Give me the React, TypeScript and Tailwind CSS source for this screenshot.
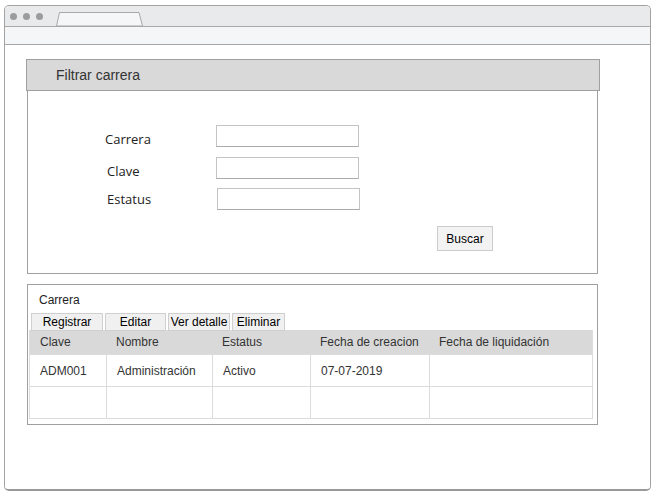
const sans = { fontFamily: '"Liberation Sans", Arial, sans-serif' };

const columns = [
  { label: 'Clave', width: 'w-[76px]' },
  { label: 'Nombre', width: 'w-[106px]' },
  { label: 'Estatus', width: 'w-[98px]' },
  { label: 'Fecha de creacion', width: 'w-[119px]' },
  { label: 'Fecha de liquidación', width: 'flex-1' },
];

const rows = [
  ['ADM001', 'Administración', 'Activo', '07-07-2019', ''],
  ['', '', '', '', ''],
];

function Field({ label, labelClass, inputClass }: { label: string; labelClass?: string; inputClass?: string }) {
  return (
    <div className="flex items-center h-[22px]">
      <div
        className={`w-[111px] text-[13px] text-[#222] ${labelClass ?? ''}`}
        style={{ fontFamily: '"Open Sans", "Noto Sans", sans-serif' }}
      >
        {label}
      </div>
      <div className={`w-[143px] h-[22px] border border-[#c4c4c4] border-b-[#aaa] bg-white ${inputClass ?? ''}`} />
    </div>
  );
}

function SmallButton({ label, width }: { label: string; width: string }) {
  return (
    <div className={`${width} h-[18px] flex items-center justify-center bg-[#f0f0f0] border border-[#cfcfcf] text-[12px] text-black`}>
      {label}
    </div>
  );
}

export default function App() {
  return (
    <div className="w-[656px] h-[497px] bg-white pt-[5px] pl-[4px]" style={sans}>
      <div className="w-[647px] h-[486px] rounded-[5px] border border-[#a3a3a3] border-b-2 border-b-[#999] overflow-hidden flex flex-col">
        {/* title bar */}
        <div className="h-[21px] bg-[#e9eaeb] border-b border-[#a8a8a8] flex items-end shrink-0">
          <div className="flex gap-[6px] self-center ml-[5px] mt-[1px]">
            <span className="w-[7px] h-[7px] rounded-full bg-[#9c9c9c]" />
            <span className="w-[7px] h-[7px] rounded-full bg-[#9c9c9c]" />
            <span className="w-[7px] h-[7px] rounded-full bg-[#9c9c9c]" />
          </div>
          <svg width="87" height="14" viewBox="0 0 87 14" className="ml-[13px] block">
            <path d="M0.5 14 L3.5 0.5 L83 0.5 L86.5 14 Z" fill="#f5f6f7" stroke="#a8a8a8" strokeWidth="1" />
          </svg>
        </div>
        {/* address bar */}
        <div className="h-[18px] bg-[#f5f6f7] border-b border-[#a8a8a8] shrink-0" />

        {/* content */}
        <div className="flex-1 bg-white pl-[21px] pt-[14px]">
          {/* filter panel */}
          <div className="w-[574px]">
            <div className="h-[32px] bg-[#d9d9d9] border border-[#a0a0a0] flex items-center pl-[29px] text-[14px] text-[#333]">
              Filtrar carrera
            </div>
            <div className="ml-[1px] w-[571px] h-[183px] border border-t-0 border-[#a0a0a0] pt-[34px] pl-[77px]">
              <div className="flex flex-col">
                <Field label="Carrera" labelClass="pt-[7px]" />
                <div className="h-[10px]" />
                <Field label="Clave" labelClass="pl-[2px] pt-[7px]" />
                <div className="h-[9px]" />
                <Field label="Estatus" labelClass="pl-[2px] pt-[2px]" inputClass="ml-[1px]" />
              </div>
              <div className="mt-[16px] ml-[332px] w-[56px] h-[25px] bg-[#f3f3f3] border border-[#cccccc] flex items-center justify-center text-[12px] text-black">
                Buscar
              </div>
            </div>
          </div>

          {/* results panel */}
          <div className="mt-[10px] ml-[1px] w-[571px] h-[141px] border border-[#a0a0a0] pl-[1px] pt-[8px]">
            <div className="pl-[10px] text-[12px] text-[#222] leading-[14px]">Carrera</div>
            <div className="flex gap-[2px] mt-[6px] pl-[2px]">
              <SmallButton label="Registrar" width="w-[72px]" />
              <SmallButton label="Editar" width="w-[61px]" />
              <SmallButton label="Ver detalle" width="w-[62px]" />
              <SmallButton label="Eliminar" width="w-[53px]" />
            </div>
            <div className="-mt-px w-[564px] border-r border-l border-b border-[#dcdcdc] text-[12px] text-[#333]">
              <div className="flex h-[24px] bg-[#d9d9d9]">
                {columns.map((c) => (
                  <div key={c.label} className={`${c.width} pl-[10px] flex items-center`}>
                    {c.label}
                  </div>
                ))}
              </div>
              {rows.map((r, i) => (
                <div key={i} className="flex h-[32px] border-t border-[#dcdcdc]">
                  {r.map((v, j) => (
                    <div
                      key={j}
                      className={`${columns[j].width} pl-[10px] flex items-center ${j > 0 ? 'border-l border-[#dcdcdc]' : ''}`}
                    >
                      {v}
                    </div>
                  ))}
                </div>
              ))}
            </div>
          </div>
        </div>
      </div>
    </div>
  );
}
